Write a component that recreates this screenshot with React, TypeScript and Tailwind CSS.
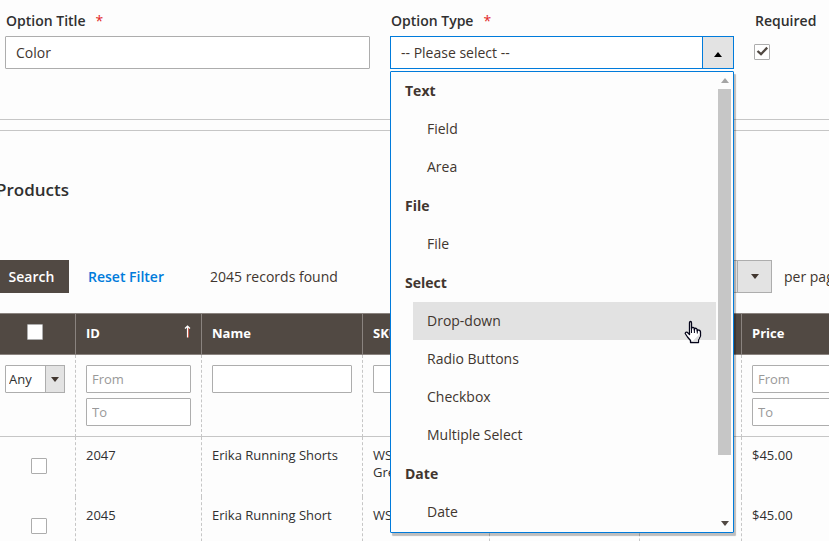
import type { ReactNode } from "react";

const optionGroups = [
  { label: "Text", options: ["Field", "Area"] },
  { label: "File", options: ["File"] },
  { label: "Select", options: ["Drop-down", "Radio Buttons", "Checkbox", "Multiple Select"] },
  { label: "Date", options: ["Date"] },
];

const products = [
  { id: "2047", name: "Erika Running Shorts", sku: ["WSH12-", "Green"], price: "$45.00" },
  { id: "2045", name: "Erika Running Short", sku: ["WSH12-31"], price: "$45.00" },
];

function Triangle({ up = false, className }: { up?: boolean; className: string }) {
  return (
    <svg className={className} width="8" height="5" viewBox="0 0 8 5" aria-hidden="true">
      <path d={up ? "M0 5 4 0 8 5Z" : "M0 0H8L4 5Z"} fill="currentColor" />
    </svg>
  );
}

function FieldLabel({ htmlFor, required, children }: { htmlFor: string; required?: boolean; children: ReactNode }) {
  return (
    <label htmlFor={htmlFor} className="block h-[26px] pl-px whitespace-nowrap text-sm leading-[22px] font-semibold text-[#303030]">
      {children}
      {required && <span className="ml-[10px] font-medium text-[#e22626]">*</span>}
    </label>
  );
}

function Checkbox({ id, label, checked = false }: { id: string; label?: string; checked?: boolean }) {
  return (
    <span className="relative inline-block size-4 align-top">
      <input
        id={id}
        type="checkbox"
        aria-label={label}
        defaultChecked={checked}
        className="peer block size-4 appearance-none rounded-[1px] border border-[#adadad] bg-white"
      />
      <svg className="pointer-events-none absolute inset-0 hidden text-[#514943] peer-checked:block" viewBox="0 0 16 16" aria-hidden="true">
        <path d="M3.5 7 7 10.2 13.2 3.6" fill="none" stroke="currentColor" strokeWidth="2.3" />
      </svg>
    </span>
  );
}

function FilterInput({ label, placeholder }: { label: string; placeholder?: string }) {
  return (
    <input
      type="text"
      aria-label={label}
      placeholder={placeholder}
      className="block h-7 w-full rounded-[1px] border border-[#adadad] bg-white px-[5px] text-[13px] leading-[18px] text-[#303030] placeholder:text-[#999999]"
    />
  );
}

function OptionMenu() {
  return (
    <div className="absolute top-[35px] left-0 z-10 flex h-[462px] w-full rounded-[1px] border border-[#007bdb] bg-[#fdfdfd] shadow-[2px_3px_1px_rgba(0,0,0,0.25)]">
      <ul role="listbox" aria-label="Option types" className="flex min-w-0 flex-1 flex-col gap-px text-sm leading-[38px]">
        {optionGroups.map((group) => (
          <li key={group.label} role="group" aria-label={group.label}>
            <div className="pl-[14px] font-bold text-[#41362f]">{group.label}</div>
            <ul>
              {group.options.map((option) => (
                <li
                  key={option}
                  role="option"
                  aria-selected={option === "Drop-down"}
                  className="mr-[2px] ml-[22px] pl-[14px] text-[#41362f] aria-selected:bg-[#e2e2e2]"
                >
                  {option}
                </li>
              ))}
            </ul>
          </li>
        ))}
      </ul>
      <div className="mr-[2px] flex w-[13px] flex-col items-center">
        <div className="flex h-[17px] items-center text-[#a5a5a5]">
          <Triangle up className="block" />
        </div>
        <div className="w-full flex-1">
          <div className="h-[86%] w-full bg-[#c6c6c6]" />
        </div>
        <div className="flex h-[18px] items-center text-[#514943]">
          <Triangle className="block" />
        </div>
      </div>
      <svg className="absolute right-[31px] bottom-[188px]" width="18" height="24" viewBox="0 0 18 24" aria-hidden="true">
        <path
          d="M5.5 14.5V3Q5.5 1.5 6.5 1.5T7.5 3V9L8 7.5Q9.5 7 10.3 8.3V10L10.8 8.3Q12.5 8 13.2 9.5V11L13.8 9.8Q16.5 10 16.5 12V16L14.5 20V22.5H6.5V20.5L3.5 17 1.2 13.5Q1.5 11.5 3.2 12.3Z"
          fill="#fff"
          stroke="#05051a"
          strokeWidth="1.3"
          strokeLinejoin="round"
        />
        <path d="M7.5 8V13M10.4 9V13M13.3 10V13.5" stroke="#05051a" fill="none" />
        <path d="M8 21.7 15.8 14V16L14 19.7V21.7Z" fill="#dedede" />
      </svg>
    </div>
  );
}

const headCell = "h-[42px] border-y border-r border-[#8a837f] px-[10px] pb-[2px] text-left font-bold text-white";
const filterCell = "h-[82px] border-r border-b border-r-[#c6c6c6] border-b-[#c6c6c6] px-[10px] pt-[10px] align-top [border-right-style:dashed]";
const bodyCell = "h-[60px] border-r border-dashed border-[#c6c6c6] px-[10px] pt-[10px] align-top";

function ProductTable() {
  return (
    <table className="w-full table-fixed border-separate border-spacing-0 text-[13px] leading-[17px] text-[#303030]">
      <colgroup>
        <col className="w-[76px]" />
        <col className="w-[126px]" />
        <col className="w-[161px]" />
        <col className="w-[127px]" />
        <col className="w-[150px]" />
        <col className="w-[102px]" />
        <col className="w-[126px]" />
      </colgroup>
      <thead className="bg-[#514943]">
        <tr>
          <th scope="col" className="h-[42px] border-y border-r border-[#8a837f] pr-[5px] pb-[4px] text-center">
            <Checkbox id="all" label="Select all products" />
          </th>
          <th scope="col" className={headCell}>
            <span className="flex items-center justify-between">
              ID
              <svg className="mb-1" width="7" height="13" viewBox="0 0 7 13" aria-hidden="true">
                <path d="M4.5 3V12.5" stroke="#c8503f" />
                <path d="M3.5 12.5V1M1 3.5 3.5 1 6 3.5" fill="none" stroke="#fff" strokeWidth="1.2" />
              </svg>
            </span>
          </th>
          <th scope="col" className={headCell}>Name</th>
          <th scope="col" className={headCell}>SKU</th>
          <th scope="col" className={headCell} aria-label="Status" />
          <th scope="col" className={headCell} aria-label="Type" />
          <th scope="col" className={headCell}>Price</th>
        </tr>
      </thead>
      <tbody>
        <tr>
          <td className="border-r border-b border-r-[#c6c6c6] border-b-[#c6c6c6] pt-[10px] pr-[10px] pl-[5px] align-top [border-right-style:dashed]">
            <div className="relative">
              <select
                aria-label="Selected filter"
                className="block h-7 w-full appearance-none rounded-[1px] border border-[#adadad] bg-white pl-[3px] text-[13px]"
              >
                <option>Any</option>
              </select>
              <span className="pointer-events-none absolute inset-y-0 right-0 flex w-5 items-center justify-center border border-[#adadad] bg-[#e3e3e3] text-[#41362f]">
                <Triangle className="block" />
              </span>
            </div>
          </td>
          <td className={filterCell}>
            <div className="flex flex-col gap-[5px]">
              <FilterInput label="ID from" placeholder="From" />
              <FilterInput label="ID to" placeholder="To" />
            </div>
          </td>
          <td className={filterCell}><FilterInput label="Name" /></td>
          <td className={filterCell}><FilterInput label="SKU" /></td>
          <td className={filterCell} />
          <td className={filterCell} />
          <td className={filterCell}>
            <div className="flex flex-col gap-[5px]">
              <FilterInput label="Price from" placeholder="From" />
              <FilterInput label="Price to" placeholder="To" />
            </div>
          </td>
        </tr>
        {products.map((product) => (
          <tr key={product.id}>
            <td className="h-[60px] border-r border-dashed border-[#c6c6c6] pt-[21px] pl-[3px] text-center align-top">
              <Checkbox id={"product-" + product.id} label={"Select " + product.name} />
            </td>
            <td className={bodyCell}>{product.id}</td>
            <td className={bodyCell}>{product.name}</td>
            <td className={bodyCell}>
              {product.sku.map((line) => (
                <div key={line}>{line}</div>
              ))}
            </td>
            <td className={bodyCell} />
            <td className={bodyCell} />
            <td className={bodyCell}>{product.price}</td>
          </tr>
        ))}
      </tbody>
    </table>
  );
}

export default function App() {
  return (
    <div className="h-screen overflow-hidden bg-[#fdfdfd] font-['Open_Sans',sans-serif] text-sm text-[#41362f]">
      <section className="grid h-[120px] grid-cols-[365fr_344fr_75fr] gap-5 border-b border-[#c6c6c6] pt-[10px] pl-[5px]">
        <div>
          <FieldLabel htmlFor="option-title" required>Option Title</FieldLabel>
          <input
            id="option-title"
            type="text"
            defaultValue="Color"
            className="block h-[33px] w-full rounded-[1px] border border-[#adadad] bg-white px-[10px]"
          />
        </div>
        <div>
          <FieldLabel htmlFor="option-type" required>Option Type</FieldLabel>
          <div className="relative">
            <select
              id="option-type"
              className="block h-[33px] w-full appearance-none border border-[#007bdb] bg-white px-[10px]"
            >
              <option>-- Please select --</option>
            </select>
            <span className="pointer-events-none absolute inset-y-0 right-0 flex w-8 items-center justify-center border border-[#007bdb] bg-[#e3e3e3] pt-1 text-black">
              <Triangle up className="block" />
            </span>
            <OptionMenu />
          </div>
        </div>
        <div>
          <FieldLabel htmlFor="required">Required</FieldLabel>
          <div className="pt-2">
            <Checkbox id="required" checked />
          </div>
        </div>
      </section>

      <section className="mt-[10px] border-t border-[#c6c6c6]">
        <h2 className="-ml-1 pt-[47px] text-[17px] leading-6 font-semibold text-[#303030]">Products</h2>
        <div className="mt-[58px] mb-5 flex h-[33px] items-center">
          <button type="button" className="h-full w-[69px] bg-[#514943] pr-[6px] font-semibold text-white">Search</button>
          <button type="button" className="ml-[19px] font-semibold text-[#007bdb]">Reset Filter</button>
          <span className="ml-[46px]">2045 records found</span>
          <div className="relative ml-auto h-full w-[90px]">
            <select
              aria-label="Records per page"
              className="block h-full w-full appearance-none rounded-[1px] border border-[#adadad] bg-[#e3e3e3] pl-[10px]"
            >
              <option>20</option>
            </select>
            <span className="pointer-events-none absolute inset-y-0 right-0 flex w-[35px] items-center justify-center border border-[#adadad] text-[#41362f]">
              <Triangle className="block" />
            </span>
          </div>
          <span className="ml-3 w-[45px] overflow-hidden whitespace-nowrap">per page</span>
        </div>
        <ProductTable />
      </section>
    </div>
  );
}
